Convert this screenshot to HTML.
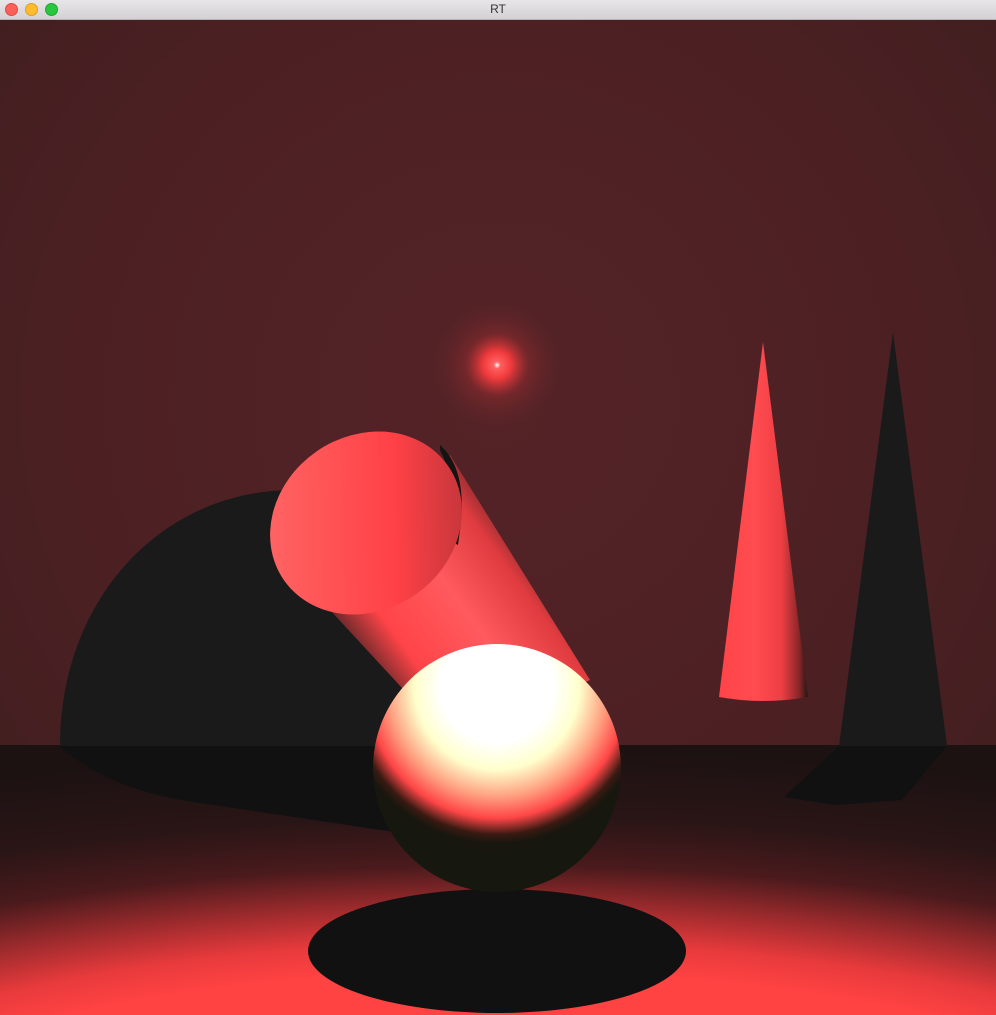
<!DOCTYPE html>
<html><head><meta charset="utf-8"><style>
html,body{margin:0;padding:0;width:996px;height:1015px;overflow:hidden;background:#4a2022}
.tb{position:absolute;left:0;top:0;width:996px;height:19px;background:linear-gradient(#e8e6e8,#d3d1d3);border-bottom:1px solid #b5b3b5;font:12px "Liberation Sans",sans-serif;color:#333;text-align:center;line-height:19px}
.d{position:absolute;top:3px;width:12px;height:12px;border-radius:50%}
svg{position:absolute;left:0;top:20px}
</style></head><body>
<div class="tb">RT
<div class="d" style="left:5px;background:#fc5f57;border:0.5px solid #de4a42;width:11px;height:11px"></div>
<div class="d" style="left:25px;background:#fdbc2e;border:0.5px solid #de9f20;width:11px;height:11px"></div>
<div class="d" style="left:45px;background:#29c73f;border:0.5px solid #1aab29;width:11px;height:11px"></div>
</div>
<svg width="996" height="995" viewBox="0 20 996 995">
<defs>
<radialGradient id="wall" cx="497" cy="400" r="700" gradientUnits="userSpaceOnUse">
<stop offset="0" stop-color="#542327"/><stop offset="0.6" stop-color="#4c2023"/><stop offset="1" stop-color="#3f1e1f"/></radialGradient>
<radialGradient id="floor" cx="497" cy="1230" r="480" gradientTransform="translate(497 1230) scale(3 1) translate(-497 -1230)" gradientUnits="userSpaceOnUse">
<stop offset="0" stop-color="#ff4242"/><stop offset="0.54" stop-color="#ff4242"/><stop offset="0.6" stop-color="#e83a3c"/><stop offset="0.68" stop-color="#9a2a2c"/><stop offset="0.76" stop-color="#4a1a1c"/><stop offset="0.86" stop-color="#2a1516"/><stop offset="1" stop-color="#1d1212"/></radialGradient>
<radialGradient id="glow" cx="497" cy="365" r="70" gradientUnits="userSpaceOnUse">
<stop offset="0" stop-color="#fff"/><stop offset="0.05" stop-color="#ff6060"/><stop offset="0.2" stop-color="#f03a3c"/><stop offset="0.45" stop-color="#8a2a2d" stop-opacity="0.6"/><stop offset="1" stop-color="#542327" stop-opacity="0"/></radialGradient>
<radialGradient id="sph" cx="497" cy="690" r="175" fx="497" fy="685" gradientUnits="userSpaceOnUse">
<stop offset="0" stop-color="#fff"/><stop offset="0.32" stop-color="#fff"/><stop offset="0.47" stop-color="#ffffcc"/><stop offset="0.62" stop-color="#ffa080"/><stop offset="0.74" stop-color="#ff4646"/><stop offset="0.83" stop-color="#3a1a12"/><stop offset="0.88" stop-color="#17170f"/><stop offset="1" stop-color="#16170f"/></radialGradient>
<linearGradient id="cap" x1="280" y1="470" x2="460" y2="590" gradientUnits="userSpaceOnUse">
<stop offset="0" stop-color="#ff6464"/><stop offset="0.6" stop-color="#ff4146"/><stop offset="1" stop-color="#b83439"/></linearGradient>
<linearGradient id="body" x1="370" y1="700" x2="560" y2="560" gradientUnits="userSpaceOnUse">
<stop offset="0" stop-color="#1a1a1a"/><stop offset="0.25" stop-color="#ff4448"/><stop offset="0.55" stop-color="#ff5a5e"/><stop offset="0.8" stop-color="#e03c40"/><stop offset="1" stop-color="#4a1c1e"/></linearGradient>
<linearGradient id="cone" x1="719" y1="0" x2="808" y2="0" gradientUnits="userSpaceOnUse">
<stop offset="0" stop-color="#ff4448"/><stop offset="0.4" stop-color="#ff4c50"/><stop offset="0.7" stop-color="#ee3f44"/><stop offset="0.9" stop-color="#8a2628"/><stop offset="1" stop-color="#221616"/></linearGradient>
</defs>
<rect x="0" y="20" width="996" height="726" fill="url(#wall)"/>
<rect x="0" y="745" width="996" height="270" fill="url(#floor)"/>
<circle cx="497" cy="365" r="70" fill="url(#glow)"/>
<path d="M60,746 C60,600 160,492 290,490 C400,490 560,600 600,746 Z" fill="#1a1a1a"/>
<path d="M60,746 C90,775 140,795 200,803 L395,832 L560,832 L600,746 Z" fill="#111"/>
<path d="M450,455 L590,680 L450,740 L330,610 Z" fill="url(#body)"/>
<path d="M440,445 Q468,470 460,530 L458,545 L450,540 Q456,480 440,450 Z" fill="#141414"/>
<ellipse cx="366" cy="523" rx="100" ry="87" transform="rotate(-35 366 523)" fill="url(#cap)"/>
<ellipse cx="497" cy="951" rx="189" ry="62" fill="#111"/>
<circle cx="497" cy="768" r="124" fill="url(#sph)"/>
<path d="M763,342 L808,697 Q763,705 719,697 Z" fill="url(#cone)"/>
<path d="M839,746 L947,746 L902,800 L835,805 L784,797 Z" fill="#111"/>
<path d="M893,332 L947,746 L839,746 Z" fill="#1a1a1a"/>
</svg>
</body></html>
